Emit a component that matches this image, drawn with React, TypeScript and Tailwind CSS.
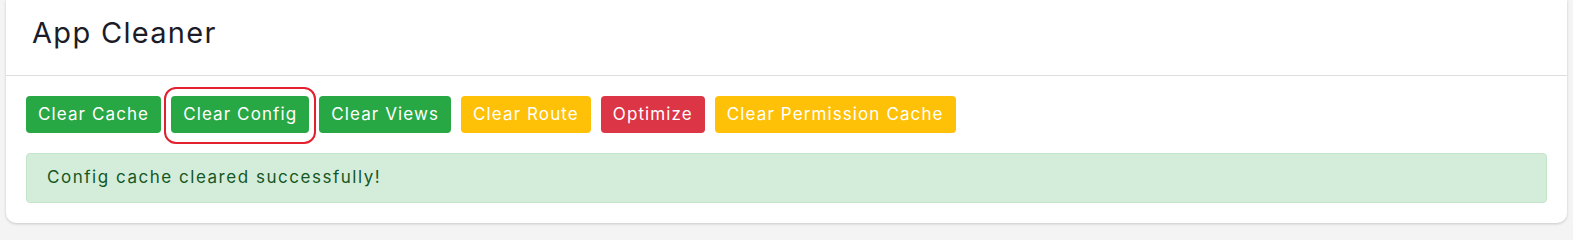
const BUTTONS = [
  { label: "Clear Cache", color: "bg-[#28a745]" },
  { label: "Clear Config", color: "bg-[#28a745]", active: true },
  { label: "Clear Views", color: "bg-[#28a745]" },
  { label: "Clear Route", color: "bg-[#ffc107]" },
  { label: "Optimize", color: "bg-[#dc3545]" },
  { label: "Clear Permission Cache", color: "bg-[#ffc107]" },
];

export default function App() {
  return (
    <div className="min-h-[239px] bg-[#f4f4f4] px-[6px] pb-[17px] font-['Inter',sans-serif]">
      <div className="rounded-b-[10px] bg-white shadow-[0_1px_3px_rgba(0,0,0,0.18)]">
        <div className="flex h-[76px] items-center border-b border-[#dedede] px-[26px] pb-[10px]">
          <h1 className="text-[29px] font-normal tracking-[0.045em] text-[#1c1c28]">App Cleaner</h1>
        </div>
        <div className="px-[20px] pt-[20px] pb-[20px]">
          <div className="flex gap-[10px]">
            {BUTTONS.map((b) => (
              <div key={b.label} className="relative">
                <button
                  type="button"
                  className={`h-[37px] rounded-[4px] px-[12px] text-[17px] tracking-[0.065em] text-white ${b.color}`}
                >
                  {b.label}
                </button>
                {b.active && (
                  <span className="pointer-events-none absolute -inset-x-[7px] -top-[9px] -bottom-[11px] rounded-[12px] border-2 border-[#e3202e]" />
                )}
              </div>
            ))}
          </div>
          <div className="mt-[20px] flex h-[50px] items-center rounded-[4px] border border-[#c3e6cb] bg-[#d4edda] px-[20px] text-[17px] tracking-[0.09em] text-[#155724]">
            Config cache cleared successfully!
          </div>
        </div>
      </div>
    </div>
  );
}
